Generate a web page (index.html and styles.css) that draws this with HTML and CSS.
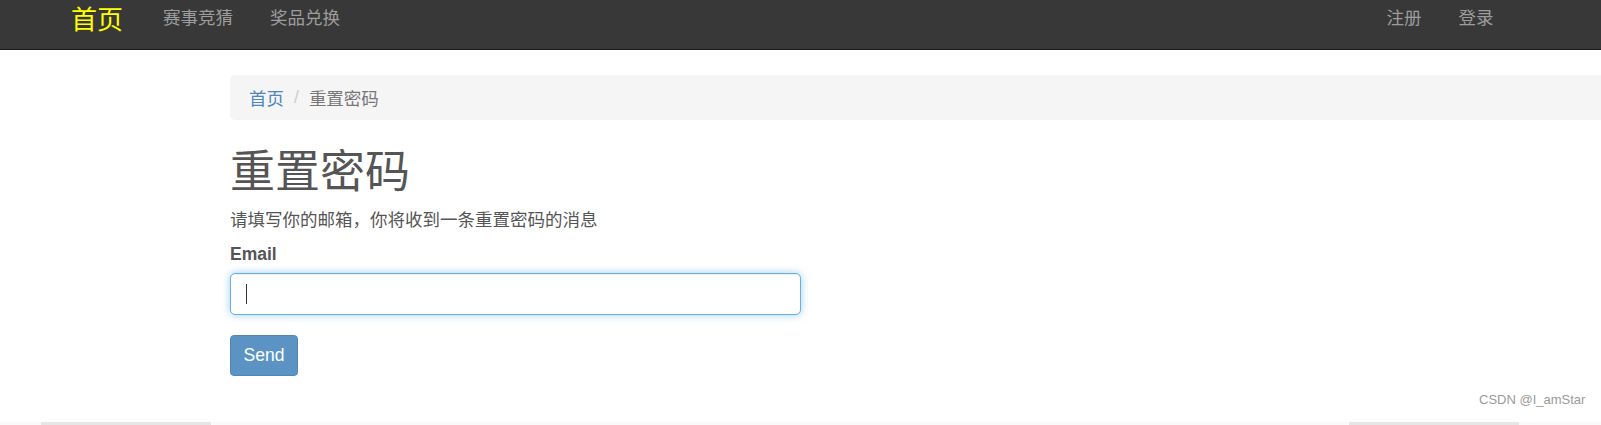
FILE: index.html
```html
<!DOCTYPE html>
<html lang="zh-CN">
<head>
<meta charset="utf-8">
<title>重置密码</title>
<link rel="stylesheet" href="styles.css">
</head>
<body>
<nav class="navbar">
  <div class="nav-inner">
    <a class="brand" href="#">首页</a>
    <ul class="nav-list">
      <li><a href="#">赛事竞猜</a></li>
      <li><a href="#">奖品兑换</a></li>
    </ul>
    <ul class="nav-list nav-right">
      <li><a href="#">注册</a></li>
      <li><a href="#">登录</a></li>
    </ul>
  </div>
</nav>
<main class="content">
  <ol class="breadcrumb">
    <li><a href="#">首页</a></li>
    <li class="sep">/</li>
    <li class="active">重置密码</li>
  </ol>
  <h1 class="title">重置密码</h1>
  <p class="lead-text">请填写你的邮箱，你将收到一条重置密码的消息</p>
  <form class="form">
    <label class="label" for="email">Email</label>
    <div class="input"><span class="caret"></span></div>
    <button class="btn" type="button">Send</button>
  </form>
</main>
<div class="bottom-bar">
  <span class="seg seg-left"></span>
  <span class="seg seg-right"></span>
</div>
<div class="watermark">CSDN @I_amStar</div>
</body>
</html>
```

FILE: styles.css
```css
* { box-sizing: border-box; }
html, body {
  margin: 0;
  padding: 0;
  background: #fff;
  overflow: hidden;
}
body {
  font-family: "Liberation Sans", Arial, "Noto Sans CJK SC", sans-serif;
  font-size: 17.5px;
  line-height: 25px;
  color: #555;
  width: 1601px;
  height: 425px;
  position: relative;
}
a { text-decoration: none; }

.navbar {
  height: 50px;
  background: #383838;
  border-bottom: 1px solid #1a1a1a;
}
.nav-inner {
  display: flex;
  align-items: flex-start;
  padding-left: 52px;
  padding-right: 89px;
  height: 100%;
}
.brand {
  font-family: "Noto Sans CJK SC", sans-serif;
  font-size: 26px;
  line-height: 30px;
  color: #ffff00;
  padding: 3px 19px 0 19px;
  display: block;
}
.nav-list {
  list-style: none;
  margin: 0;
  padding: 0;
  display: flex;
}
.nav-list a {
  display: block;
  font-family: "Noto Sans CJK SC", sans-serif;
  font-size: 17.5px;
  line-height: 25px;
  color: #9d9d9d;
  padding: 4px 18.5px 0 18.5px;
}
.nav-list li:first-child a { padding-left: 21px; }
.nav-right { margin-left: auto; }
.nav-right li:first-child a { padding-left: 18.5px; }

.content {
  padding-left: 230px;
}
.breadcrumb {
  list-style: none;
  margin: 25px 0 0 0;
  height: 45px;
  padding: 10px 19px;
  background: #f5f5f5;
  border-radius: 5px 0 0 5px;
  display: flex;
  align-items: center;
  font-family: "Noto Sans CJK SC", sans-serif;
  font-size: 17.5px;
  line-height: 25px;
}
.breadcrumb a { color: #4f86bd; }
.breadcrumb .sep {
  color: #ccc;
  padding: 0 10px;
  font-family: "Liberation Sans", sans-serif;
}
.breadcrumb .active { color: #777; }

.title {
  margin: 24px 0 0 0;
  font-family: "Noto Sans CJK SC", sans-serif;
  font-weight: 400;
  font-size: 45px;
  line-height: 50px;
  color: #555;
}
.lead-text {
  margin: 12px 0 0 0;
  font-family: "Noto Sans CJK SC", sans-serif;
  font-size: 17.5px;
  line-height: 25px;
  color: #555;
}
.form {
  display: flex;
  flex-direction: column;
  align-items: flex-start;
  margin-top: 11px;
}
.label {
  font-weight: 700;
  font-size: 17.5px;
  line-height: 25px;
  color: #555;
}
.input {
  margin-top: 6px;
  width: 571px;
  height: 42px;
  border: 1px solid #66afe9;
  border-radius: 5px;
  background: #fff;
  box-shadow: inset 0 1px 1px rgba(0,0,0,.075), 0 0 8px rgba(102,175,233,.6);
  display: flex;
  align-items: center;
  padding-left: 15px;
}
.caret {
  display: block;
  width: 1px;
  height: 20px;
  background: #333;
}
.btn {
  margin-top: 20px;
  width: 68px;
  height: 41px;
  border: 1px solid #4f88b8;
  border-radius: 4px;
  background: #5b94c4;
  color: #fff;
  font-family: "Liberation Sans", Arial, sans-serif;
  font-size: 17.5px;
  line-height: 25px;
  padding: 0;
}

.bottom-bar {
  position: absolute;
  left: 0;
  right: 0;
  bottom: 0;
  height: 3px;
  background: #fafafa;
}
.seg {
  position: absolute;
  top: 0;
  height: 3px;
  background: #e6e6e6;
}
.seg-left { left: 41px; width: 170px; }
.seg-right { left: 1349px; width: 170px; }

.watermark {
  position: absolute;
  left: 1479px;
  top: 391px;
  font-family: "Liberation Sans", Arial, sans-serif;
  font-size: 13px;
  line-height: 18px;
  color: #9a9a9a;
}
```
